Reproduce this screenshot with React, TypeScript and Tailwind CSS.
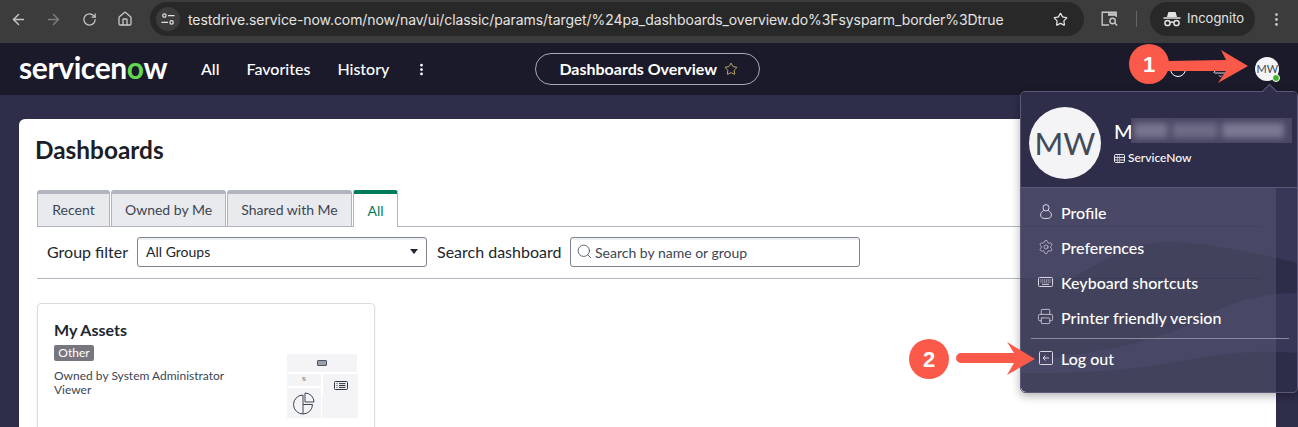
import { ArrowLeft, ArrowRight, Bell, EllipsisVertical, House, Printer, RotateCw, Search, Settings, Star } from 'lucide-react';

const lato = "font-['Lato','Noto_Sans',sans-serif]";

const Incognito = () => (
  <svg width="20" height="20" viewBox="0 0 20 20" fill="none" stroke="#e3e3e3" strokeWidth="1.5">
    <path d="M5 8l1.4-5h7.2L15 8" fill="#e3e3e3" stroke="none" />
    <path d="M1.5 9h17" />
    <circle cx="5.5" cy="14" r="2.6" />
    <circle cx="14.5" cy="14" r="2.6" />
    <path d="M8.2 13.6c1-.7 2.6-.7 3.6 0" />
  </svg>
);

const SiteTune = () => (
  <svg width="14" height="14" viewBox="0 0 14 14" fill="none" stroke="#e3e3e3" strokeWidth="1.2">
    <circle cx="3.4" cy="3.6" r="1.7" />
    <path d="M7 3.6h6.5M.5 10.4H7" />
    <circle cx="10.6" cy="10.4" r="1.7" />
  </svg>
);

const TabSearch = () => (
  <svg width="18" height="16" viewBox="0 0 18 16" fill="none" stroke="#c7c7c7" strokeWidth="1.4">
    <path d="M8 14H1.2V1.2h14V6" />
    <path d="M7 2.2h8v2.6H7z" fill="#c7c7c7" stroke="none" />
    <circle cx="11.6" cy="10" r="2.7" />
    <path d="M13.6 12l2.6 2.6" />
  </svg>
);

const Building = () => (
  <svg width="11" height="9" viewBox="0 0 11 9" fill="none" stroke="#fff" strokeWidth=".9">
    <rect x=".5" y=".5" width="10" height="8" rx="1.2" />
    <path d="M.5 3.4h10M.5 6h10M3 2h.8M5 2h.8M3 4.7h.8M5 4.7h.8M3 7.3h.8M5 7.3h.8" />
  </svg>
);

const ProfileIcon = () => (
  <svg width="12" height="15" viewBox="0 0 12 15" fill="none" stroke="#d9d8e6" strokeWidth="1">
    <ellipse cx="6" cy="3.8" rx="3" ry="3.2" />
    <path d="M3.8 6.4C2 7.400.6 9 .6 11c0 2 1.400 3.400 3.400 3.400h4c2 0 3.400-1.400 3.400-3.400 0-2-1.400-3.600-3.200-4.600" />
  </svg>
);

const KeyboardIcon = () => (
  <svg width="15" height="10" viewBox="0 0 15 10" fill="none" stroke="#d9d8e6" strokeWidth="1">
    <rect x=".5" y=".5" width="14" height="9" rx="1" />
    <path d="M2.500 3h10M2.500 5h10" strokeDasharray="1 .8" />
    <path d="M4 7.300h7" />
  </svg>
);

const LogOut = () => (
  <svg width="14" height="14" viewBox="0 0 14 14" fill="none" stroke="#d9d8e6" strokeWidth="1">
    <rect x=".5" y=".5" width="13" height="13" rx="1" />
    <path d="M10 7H4M6.500 4.500L4 7l2.500 2.500" />
  </svg>
);

const ListGlyph = () => (
  <svg width="14" height="9" viewBox="0 0 14 9" fill="none" stroke="#2d3540" strokeWidth="1">
    <rect x=".5" y=".5" width="13" height="8" rx="1" />
    <path d="M2.500 2.600h1M5 2.600h6.500M2.500 4.500h1M5 4.500h6.500M2.500 6.400h1M5 6.400h6.500" />
  </svg>
);

const PieGlyph = () => (
  <svg width="22" height="23" viewBox="0 0 22 23" fill="none" stroke="#3d4552" strokeWidth="1">
    <path d="M12 1v9h9a9 9 0 0 0-9-9z" />
    <path d="M10 3a9.500 9.500 0 1 0 9.500 9.500H10z" />
    <path d="M10 12.500V22" />
  </svg>
);

const menuItems = [
  { label: 'Profile', icon: <ProfileIcon /> },
  { label: 'Preferences', icon: <Settings size={16} strokeWidth={1} /> },
  { label: 'Keyboard shortcuts', icon: <KeyboardIcon /> },
  { label: 'Printer friendly version', icon: <Printer size={17} strokeWidth={1.1} /> },
];

const tabs = [
  { label: 'Recent', w: 'w-[73px]' },
  { label: 'Owned by Me', w: 'w-[115px]' },
  { label: 'Shared with Me', w: 'w-[125px]' },
];

const ChromeBar = () => (
  <div className="h-[43px] bg-[#3c3c3c] flex items-center text-[#c7c7c7] font-['Inter',sans-serif] shrink-0">
    <div className="flex items-center w-[150px] pl-[10px] -mt-[5px]">
      <ArrowLeft size={17} className="text-[#c7c7c7]" />
      <ArrowRight size={17} className="ml-[18px] text-[#7d7d7d]" />
      <RotateCw size={15} className="ml-[20px]" />
      <House size={16} className="ml-[20px]" />
    </div>
    <div className="w-[934px] h-[34px] -mt-[5px] rounded-full bg-[#282828] flex items-center pl-[6px] pr-[16px]">
      <div className="w-6 h-6 rounded-full bg-[#3c3c3c] flex items-center justify-center">
        <SiteTune />
      </div>
      <span className="ml-2 text-[14px] tracking-[-0.07px] text-[#e3e3e3] whitespace-nowrap">testdrive.service-now.com/now/nav/ui/classic/params/target/%24pa_dashboards_overview.do%3Fsysparm_border%3Dtrue</span>
      <Star size={15} className="ml-auto text-[#e3e3e3]" />
    </div>
    <div className="flex items-center -mt-[5px]">
      <div className="ml-[17px]"><TabSearch /></div>
      <div className="ml-[17px] w-px h-[16px] bg-[#666]" />
      <div className="ml-[13px] w-[105px] h-[34px] rounded-full bg-[#282828] flex items-center pl-[12px] gap-[5px] text-[13px] text-[#e3e3e3]">
        <Incognito />
        <span>Incognito</span>
      </div>
      <EllipsisVertical size={17} className="ml-[13px] text-[#c7c7c7]" />
    </div>
  </div>
);

const NavBar = () => (
  <div className={`h-[52px] bg-[#1a1a2b] flex items-center text-white shrink-0 ${lato}`}>
    <div className="ml-[19px] w-[149px] text-[30px] leading-none font-bold tracking-[-0.4px] whitespace-nowrap -mt-[5px]">
      servicen<span className="text-[#62d84e]">o</span>w
    </div>
    <div className="ml-[33px] -mt-px text-[16px] font-medium">All</div>
    <div className="ml-[27px] -mt-px text-[16px] font-medium">Favorites</div>
    <div className="ml-[27px] -mt-px text-[16px] font-medium">History</div>
    <EllipsisVertical size={15} strokeWidth={2.4} className="ml-[25px]" />
    <div className="ml-[106px] w-[225px] h-[32px] rounded-full border border-[#a8a8b8] flex items-center pl-[23px] pb-px gap-[7px] text-[16px] font-bold">
      <span>Dashboards Overview</span>
      <Star size={14} strokeWidth={1.4} className="text-[#e8c66e]" />
    </div>
    <div className="ml-[410px] w-[16px] h-[16px] rounded-full border border-white" />
    <Bell size={17} strokeWidth={1.2} className="ml-[26px]" />
    <div className="relative ml-[26px] w-6 h-6 rounded-full bg-[#f4f4f7] flex items-center justify-center text-[#414b58] text-[11px]">
      MW
      <div className="absolute -right-[1px] -bottom-[1px] w-[8px] h-[8px] rounded-full bg-[#45b02a] border border-white" />
    </div>
  </div>
);

const Filters = () => (
  <div className="mt-[10px] mb-[11px] flex items-center h-[30px] pl-[10px] text-[16px] text-[#20262e]">
    <span className="w-[90px]">Group filter</span>
    <div className="w-[290px] h-[30px] pb-px rounded-[3px] border border-[#7c8290] shadow-[inset_0_2px_0_#eceef1] flex items-center px-2 text-[14px]">
      All Groups
      <div className="ml-auto w-0 h-0 border-x-[4px] border-x-transparent border-t-[5px] border-t-[#20262e]" />
    </div>
    <span className="ml-[10px] w-[133px]">Search dashboard</span>
    <div className="w-[290px] h-[30px] rounded-[3px] border border-[#7c8290] shadow-[inset_0_2px_0_#eceef1] flex items-center pl-[5px] gap-[2px] text-[14px] text-[#3d4552]">
      <Search size={17} strokeWidth={1.1} className="-mt-[2px]" />
      Search by name or group
    </div>
  </div>
);

const Thumbnail = () => (
  <div className="w-[71px] flex flex-col gap-[2px]">
    <div className="w-[70px] h-[18px] bg-[#f4f4f6] flex items-center justify-center">
      <div className="w-[10px] h-[6px] rounded-[1px] border border-[#4b5360] bg-[#9aa0aa]" />
    </div>
    <div className="flex gap-[2px]">
      <div className="w-[34px] flex flex-col gap-[2px]">
        <div className="h-[12px] bg-[#f4f4f6] flex items-center justify-center text-[5px] text-[#4b5360]">%</div>
        <div className="h-[30px] bg-[#f4f4f6] flex items-center justify-center"><PieGlyph /></div>
      </div>
      <div className="w-[35px] flex flex-col">
        <div className="h-[23px] bg-[#f4f4f6] flex items-center justify-center"><ListGlyph /></div>
        <div className="h-[21px] w-[36px] -ml-px bg-[#f4f4f6] rounded-br-[3px]" />
      </div>
    </div>
  </div>
);

const Card = () => (
  <div className="flex w-[338px] h-[140px] rounded-[4px] border border-[#d9dbe0] shadow-[0_1px_2px_rgba(0,0,0,0.08)] pl-[16px] pt-[16px] text-[#20262e]">
    <div className="w-[233px]">
      <div className="text-[16px] leading-[20px] font-bold">My Assets</div>
      <div className="mt-[5px] w-[40px] h-[16px] rounded-[2px] bg-[#77767f] text-white text-[12px] leading-[16px] text-center">Other</div>
      <div className="mt-[8px] text-[12px] leading-[14px] text-[#3d4552]">Owned by System Administrator</div>
      <div className="text-[12px] leading-[14px] text-[#3d4552]">Viewer</div>
    </div>
    <div className="mt-[34px]"><Thumbnail /></div>
  </div>
);

const Page = () => (
  <div className="flex-1 min-h-0 bg-[#2e2d4a] px-[19px] pt-[24px] overflow-hidden">
    <div className={`w-[1257px] h-[400px] bg-white rounded-t-[6px] pt-[16px] pl-[16px] pr-[16px] ${lato}`}>
      <h1 className="text-[24.4px] leading-[29px] font-bold text-[#1b2026]">Dashboards</h1>
      <div className="mt-[26px] ml-[2px] flex items-end gap-px h-[37px] border-b border-[#b0b5c0] text-[14px]">
        {tabs.map((t) => (
          <div key={t.label} className={`h-[36px] ${t.w} pb-px flex items-center justify-center bg-[#e8eaee] border-t-[4px] border-x border-[#b0b5c0] rounded-t-[3px] text-[#3d4552]`}>{t.label}</div>
        ))}
        <div className="h-[37px] -mb-px w-[45px] flex items-center justify-center bg-white border-t-[4px] border-t-[#007a5a] border-x border-x-[#b0b5c0] rounded-t-[3px] text-[#007a5a]">All</div>
      </div>
      <div className="ml-[2px] border-b border-[#b0b5c0]">
        <Filters />
      </div>
      <div className="mt-[24px] ml-[2px]">
        <Card />
      </div>
    </div>
  </div>
);

const UserMenu = () => (
  <div className={`absolute left-[1020px] top-[91px] w-[278px] h-[302px] rounded-[5px] border border-[#5c5a78] shadow-[0_3px_10px_rgba(0,0,0,0.3)] text-white ${lato}`}>
    <div className="absolute -top-[6px] left-[243px] w-[11px] h-[11px] rotate-45 bg-[#2e2d4a] border-l border-t border-[#5c5a78]" />
    {/* header stays opaque, only the list below is see-through */}
    <div className="relative h-[96px] flex pl-[8px] pt-[15px] bg-[#2e2d4a] rounded-t-[5px] border-b border-[#5c5a78]">
      <div className="w-[72px] h-[72px] rounded-full bg-[#f4f4f7] flex items-center justify-center text-[#414b58] text-[31px]">MW</div>
      <div className="ml-[13px] pt-[11px]">
        <div className="flex items-center h-[25px]">
          <span className="text-[20px] font-medium">M</span>
          <div className="relative flex gap-[4px] w-[161px] h-[25px] -ml-[2px] px-[3px] pt-[5px] bg-[#484663] overflow-hidden">
            <div className="w-[34px] h-[15px] bg-[#77758e] blur-[3px]" />
            <div className="w-[46px] h-[15px] bg-[#6d6b85] blur-[3px]" />
            <div className="w-[62px] h-[15px] bg-[#7b7992] blur-[3px]" />
          </div>
        </div>
        <div className="mt-[6px] flex items-center gap-[3px] text-[12px] font-medium"><Building />ServiceNow</div>
      </div>
    </div>
    <div className="relative h-[204px] bg-[#2e2d4a]/90 rounded-b-[5px] overflow-hidden pt-[7px] text-[16px] font-medium">
      <svg className="absolute inset-0" width="278" height="204" viewBox="0 0 278 204">
        <path d="M0 0H278V75C230 65 170 50 130 55 100 60 80 75 50 90 30 95 15 92 0 90Z" fill="#5a5880" fillOpacity=".25" />
        <path d="M0 175C60 165 130 160 190 125 220 110 250 105 278 105V165C220 160 180 170 130 178 80 185 40 185 0 185Z" fill="#5a5880" fillOpacity=".25" />
      </svg>
      <div className="relative">
        {menuItems.map((m) => (
          <div key={m.label} className="h-[35px] pl-[16px] flex items-center">
            <span className="w-[24px] text-[#d9d8e6] flex -mt-[2px]"><span className="w-[17px] flex justify-center">{m.icon}</span></span>
            {m.label}
          </div>
        ))}
        <div className="mt-[3px] ml-[10px] mr-[8px] h-px bg-[#8b8a9e]" />
        <div className="mt-[2px] h-[35px] pl-[16px] flex items-center">
          <span className="w-[24px] flex -mt-[2px]"><span className="w-[17px] flex justify-center"><LogOut /></span></span>
          Log out
        </div>
      </div>
    </div>
  </div>
);

const Annotations = () => (
  <>
    <div className="absolute left-[1129px] top-[44px] w-10 h-10 rounded-full bg-[#fb5a4a] flex items-center justify-center text-white text-[22px] font-bold font-['Liberation_Sans',sans-serif]">1</div>
    <svg className="absolute left-[1165px] top-[48px]" width="90" height="36" viewBox="0 0 90 36">
      <path d="M2 13L61 12 56 2 83 18 53 35 61 23 2 23z" fill="#fb5a4a" />
    </svg>
    <div className="absolute left-[909px] top-[339px] w-10 h-10 rounded-full bg-[#fb5a4a] flex items-center justify-center text-white text-[22px] font-bold font-['Liberation_Sans',sans-serif]">2</div>
    <svg className="absolute left-[955px] top-[341px]" width="82" height="36" viewBox="0 0 82 36">
      <path d="M6 12H59L52 1 80 18 52 34 59 22H6a5 5 0 0 1 0-10z" fill="#fb5a4a" />
    </svg>
  </>
);

export default function App() {
  return (
    <div className="relative w-[1298px] h-[427px] overflow-hidden flex flex-col">
      <ChromeBar />
      <NavBar />
      <Page />
      <UserMenu />
      <Annotations />
    </div>
  );
}
